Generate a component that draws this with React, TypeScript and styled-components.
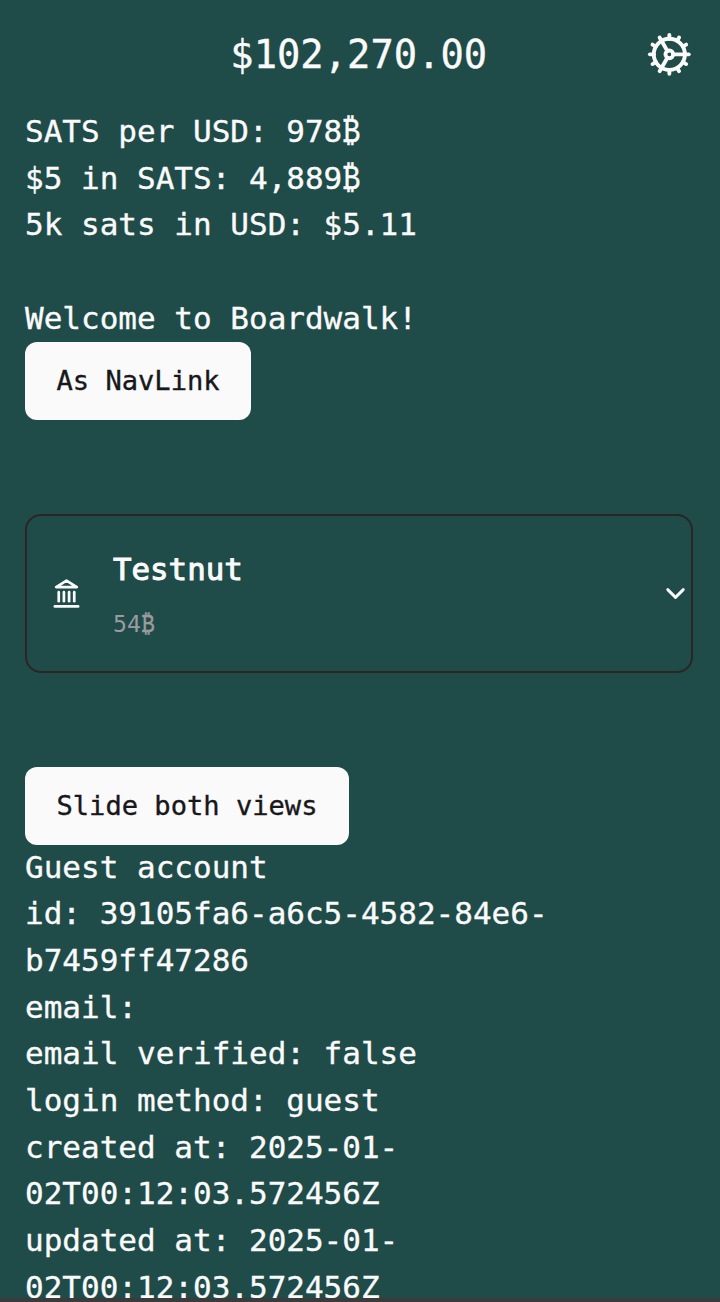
import React from "react";
import styled, { createGlobalStyle } from "styled-components";
import { ChevronDown, Cog } from "lucide-react";

const GlobalStyle = createGlobalStyle`
  *, *::before, *::after { box-sizing: border-box; }
  body { margin: 0; background: #1f4b49; }
`;

const Page = styled.div`
  display: flex;
  flex-direction: column;
  height: 1302px;
  overflow: hidden;
  background: #1f4b49;
  color: #fafafa;
  font-family: "DejaVu Sans Mono", "Liberation Mono", monospace;
  font-size: 31px;
  line-height: 46.7px;
  -webkit-text-stroke: 0.35px currentColor;
`;

const Content = styled.main`
  flex: 1;
  min-height: 0;
  padding: 0 27.5px 0 25px;
`;

const Header = styled.header`
  display: grid;
  grid-template-columns: 47px 1fr 47px;
  align-items: center;
  height: 108px;
`;

const Price = styled.h1`
  grid-column: 2;
  margin: 0;
  padding-top: 2px;
  font-size: 38.8px;
  font-weight: 400;
  text-align: center;
`;

const IconButton = styled.button`
  display: flex;
  padding: 0;
  border: 0;
  background: none;
  color: inherit;
`;

const Line = styled.p`
  margin: 0;
  min-height: 46.7px;
`;

const Account = styled.section`
  margin-top: -1px;
`;

const Coin = styled.span`
  display: inline-block;
  width: 0.602em;
  white-space: nowrap;
  transform: scale(0.9, 1.14);
  transform-origin: 50% 70%;
  -webkit-text-stroke-width: 0.4px;
`;

const Button = styled.button`
  display: block;
  height: 78px;
  padding: 0 31.5px;
  border: 0;
  border-radius: 12px;
  background: #fafafa;
  color: #18181b;
  font-family: inherit;
  font-size: 27.1px;
  line-height: 39px;
`;

const Card = styled.section`
  display: flex;
  align-items: center;
  height: 159px;
  margin: 94px 0;
  padding: 0 0 0 23.5px;
  border: 2px solid #2b2526;
  border-radius: 16px;
`;

const CardText = styled.div`
  flex: 1;
  padding: 7px 0 0 31.5px;
`;

const CardTitle = styled.h2`
  margin: 0;
  font-size: 30.8px;
  font-weight: 400;
  line-height: 47px;
  -webkit-text-stroke: 1px currentColor;
`;

const CardBalance = styled.p`
  margin: 7px 0 0;
  color: #9b9b9d;
  font-size: 23.2px;
  line-height: 47px;
  -webkit-text-stroke: 0;
`;

const BottomEdge = styled.div`
  position: relative;
  flex: none;
  height: 4px;
  background: #3b3b3b;
`;

const Landmark = () => (
  <svg width="31" height="31" viewBox="0 0 24 24" fill="none" stroke="currentColor" strokeWidth="2.1" strokeLinecap="round" strokeLinejoin="round">
    <line x1="3" x2="21" y1="22" y2="22" />
    <line x1="6" x2="6" y1="18" y2="11" />
    <line x1="10" x2="10" y1="18" y2="11" />
    <line x1="14" x2="14" y1="18" y2="11" />
    <line x1="18" x2="18" y1="18" y2="11" />
    <polygon points="12 2 20 7 4 7" />
  </svg>
);

export default function App() {
  return (
    <Page>
      <GlobalStyle />
      <Content>
        <Header>
          <Price>$102,270.00</Price>
          <IconButton aria-label="Settings"><Cog size={46.7} /></IconButton>
        </Header>
        <Line>SATS per USD: 978<Coin>₿</Coin></Line>
        <Line>$5 in SATS: 4,889<Coin>₿</Coin></Line>
        <Line>5k sats in USD: $5.11</Line>
        <Line />
        <Line>Welcome to Boardwalk!</Line>
        <Button>As NavLink</Button>
        <Card>
          <Landmark />
          <CardText>
            <CardTitle>Testnut</CardTitle>
            <CardBalance>54<Coin>₿</Coin></CardBalance>
          </CardText>
          <ChevronDown size={31} strokeWidth={2.2} />
        </Card>
        <Button>Slide both views</Button>
        <Account>
          <Line>Guest account</Line>
          <Line>id: 39105fa6-a6c5-4582-84e6-<wbr />b7459ff47286</Line>
          <Line>email:</Line>
          <Line>email verified: false</Line>
          <Line>login method: guest</Line>
          <Line>created at: 2025-01-<wbr />02T00:12:03.572456Z</Line>
          <Line>updated at: 2025-01-<wbr />02T00:12:03.572456Z</Line>
        </Account>
      </Content>
      <BottomEdge />
    </Page>
  );
}
